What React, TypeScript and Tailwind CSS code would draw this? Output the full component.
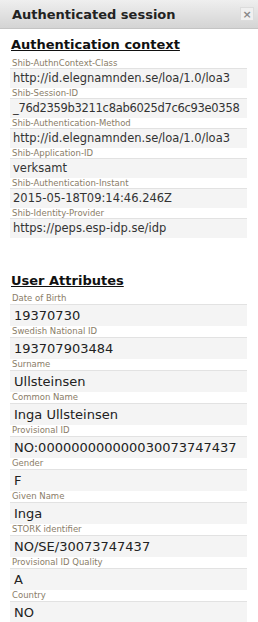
import React from "react";

const ctx: [string, string][] = [
  ["Shib-AuthnContext-Class", "http://id.elegnamnden.se/loa/1.0/loa3"],
  ["Shib-Session-ID", "_76d2359b3211c8ab6025d7c6c93e0358"],
  ["Shib-Authentication-Method", "http://id.elegnamnden.se/loa/1.0/loa3"],
  ["Shib-Application-ID", "verksamt"],
  ["Shib-Authentication-Instant", "2015-05-18T09:14:46.246Z"],
  ["Shib-Identity-Provider", "https://peps.esp-idp.se/idp"],
];

const attrs: [string, string][] = [
  ["Date of Birth", "19370730"],
  ["Swedish National ID", "193707903484"],
  ["Surname", "Ullsteinsen"],
  ["Common Name", "Inga Ullsteinsen"],
  ["Provisional ID", "NO:000000000000030073747437"],
  ["Gender", "F"],
  ["Given Name", "Inga"],
  ["STORK identifier", "NO/SE/30073747437"],
  ["Provisional ID Quality", "A"],
  ["Country", "NO"],
];

export default function App() {
  return (
    <div
      className="w-[258px] h-[622px] overflow-hidden bg-white"
      style={{ fontFamily: '"DejaVu Sans", Verdana, sans-serif' }}
    >
      <div className="h-[29px] flex items-center justify-between pl-[12px] pr-[4px] bg-gradient-to-b from-[#efefef] to-[#d4d4d4] border-b border-[#c4c4c4]">
        <span className="text-[13px] font-bold text-[#222] leading-none">Authenticated session</span>
        <span className="w-[14px] h-[14px] flex items-center justify-center bg-[#f0f0f0] border border-[#dcdcdc] text-[#888] text-[11px] font-bold leading-none">
          ×
        </span>
      </div>
      <div className="px-[10px]">
        <div className="mt-[7px] h-[22px] flex items-start pl-[1px]">
          <span className="text-[13px] font-bold text-[#111] underline leading-[18px]">Authentication context</span>
        </div>
        {ctx.map(([l, v]) => (
          <div key={l} className="w-[237px]">
            <div className="h-[10px] pl-[2px] text-[8.5px] leading-[10px] text-[#8a7d68] whitespace-nowrap">{l}</div>
            <div
              className={
                "h-[20px] bg-[#f4f4f4] border-t border-[#e2e2e2] pl-[3px] flex items-center text-[11.5px] text-[#333] whitespace-nowrap overflow-hidden" +
                (v.startsWith("_") ? " tracking-[-0.3px]" : "")
              }
            >
              {v}
            </div>
          </div>
        ))}
        <div className="mt-[34px] h-[21px] flex items-start pl-[1px]">
          <span className="text-[13px] font-bold text-[#111] underline leading-[18px]">User Attributes</span>
        </div>
        {attrs.map(([l, v]) => (
          <div key={l} className="w-[237px]">
            <div className="h-[11px] pl-[2px] text-[8.5px] leading-[11px] text-[#8a7d68] whitespace-nowrap">{l}</div>
            <div className="h-[22px] bg-[#f4f4f4] border-t border-[#e2e2e2] pl-[4px] flex items-center text-[13px] text-[#222] whitespace-nowrap overflow-hidden">
              {v}
            </div>
          </div>
        ))}
      </div>
    </div>
  );
}
